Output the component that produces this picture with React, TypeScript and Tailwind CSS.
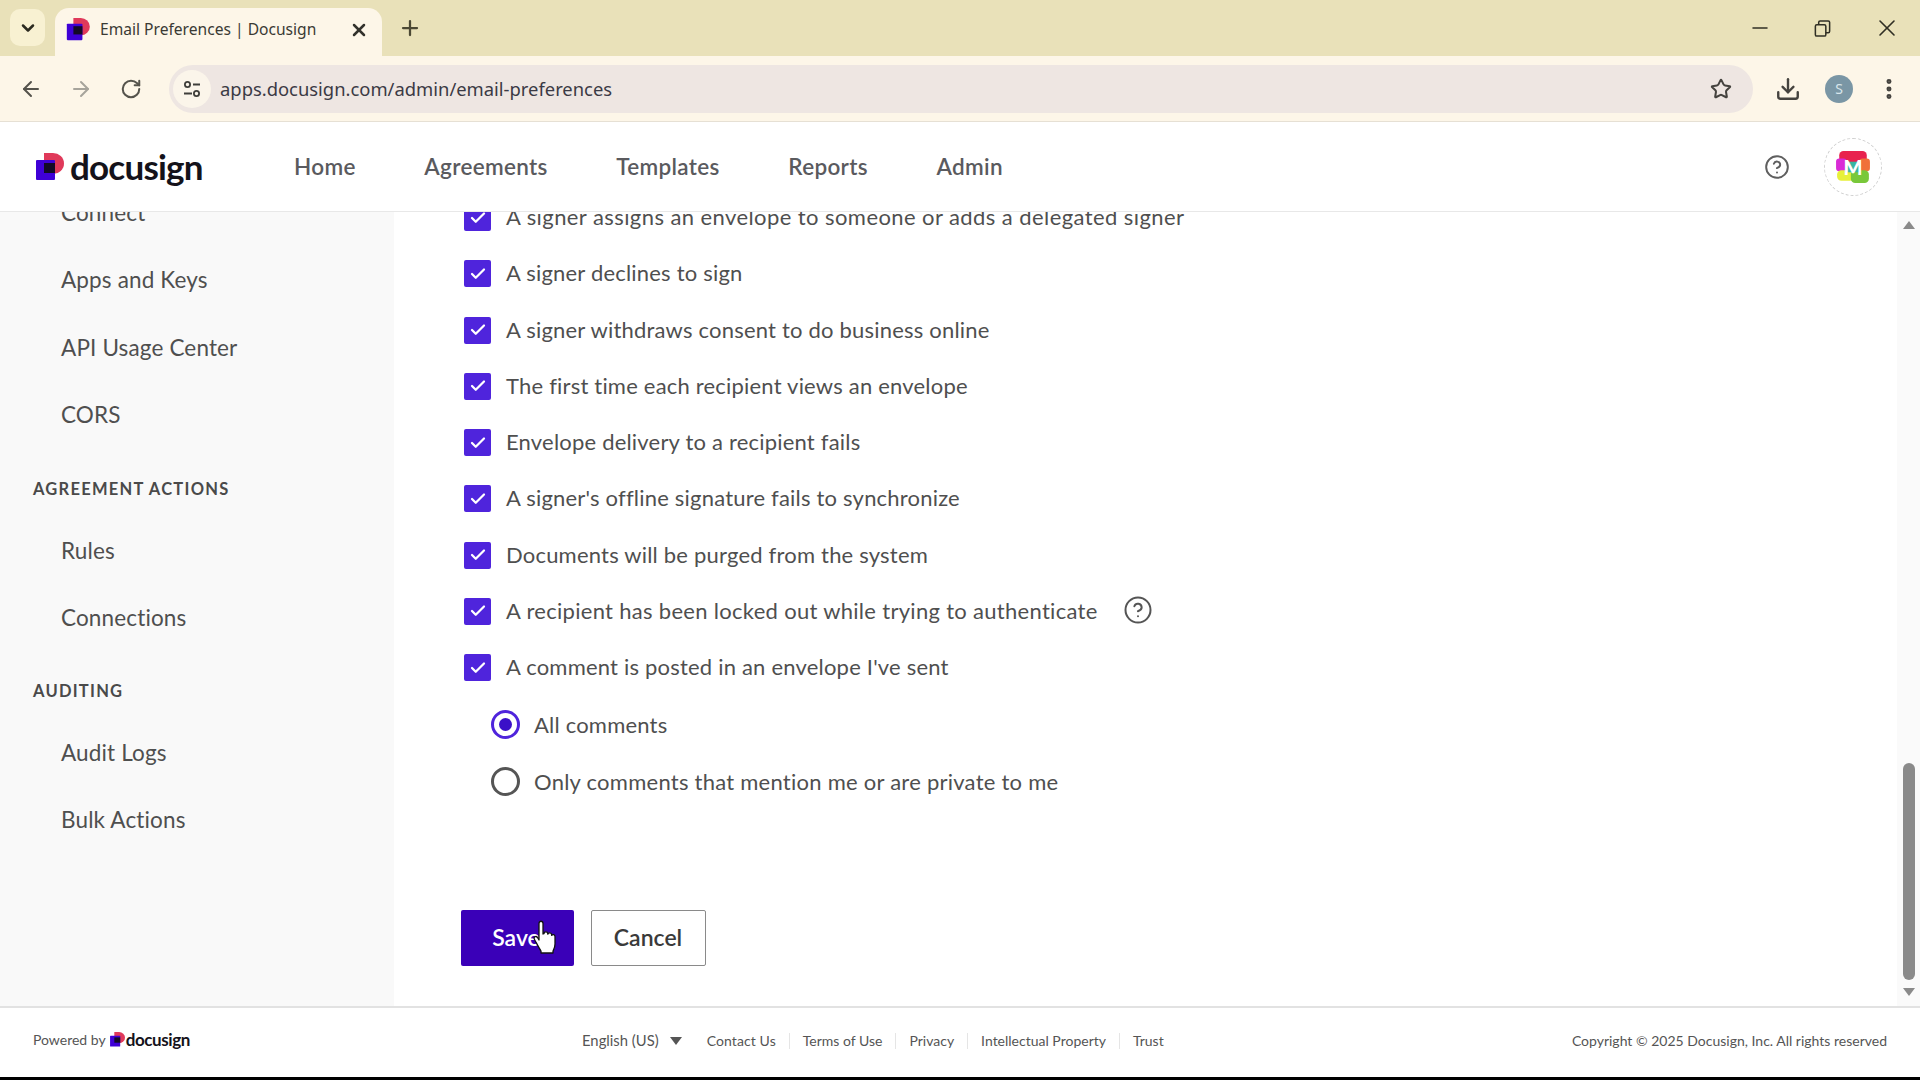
import React from "react";
import { ArrowLeft, ArrowRight, RotateCw, Plus, X, ChevronDown, Star, Download, EllipsisVertical, CircleHelp, Check, Minus } from "lucide-react";

const body = { fontFamily: '"Lato", "Noto Sans", sans-serif' };

function Logo({ className }: { className?: string }) {
  return (
    <svg viewBox="0 0 30 28" className={className}>
      <path d="M10 0h9a11 10.5 0 0 1 0 21h-9z" fill="#e0395a" />
      <rect x="2" y="7" width="19" height="20" rx="1" fill="#3f00d6" />
      <rect x="10" y="10" width="11" height="10" fill="#130a26" />
    </svg>
  );
}

function Row({ children, wide }: { children: React.ReactNode; wide?: boolean }) {
  return (
    <div className="flex h-[56.25px] items-center">
      <span className="flex h-[27px] w-[27px] translate-y-px items-center justify-center rounded-[2px] bg-[#4f24dc]">
        <Check className="h-[18px] w-[18px] text-white" strokeWidth={3} />
      </span>
      <span className={wide ? "ml-[15px] text-[22px] tracking-[0.42px] text-[#4f4f4f]" : "ml-[15px] text-[22px] tracking-[0.2px] text-[#4f4f4f]"}>{children}</span>
    </div>
  );
}

function Item({ label }: { label: string }) {
  return <div className="flex h-[67.3px] items-center pl-[61px] text-[22.5px] tracking-[0.15px] text-[#4f4f4f]">{label}</div>;
}

function Section({ label, top }: { label: string; top: string }) {
  return <div className={`flex h-[40px] items-center pl-[33px] text-[16.5px] font-bold tracking-[1.25px] text-[#4a4a4a] ${top}`}>{label}</div>;
}

const rows = [
  "A signer declines to sign",
  "A signer withdraws consent to do business online",
  "The first time each recipient views an envelope",
  "Envelope delivery to a recipient fails",
  "A signer's offline signature fails to synchronize",
  "Documents will be purged from the system",
];

export default function App() {
  return (
    <div className="flex h-screen w-full flex-col overflow-hidden bg-black" style={body}>
      {/* Tab strip */}
      <div className="relative flex h-[56px] shrink-0 items-end bg-[#e9e1b9]">
        <div className="mb-[10px] ml-[10px] flex h-[37px] w-[35px] items-center justify-center rounded-[10px] bg-[#f8f1d2]">
          <ChevronDown className="h-5 w-5 text-[#2b2a1f]" strokeWidth={3} />
        </div>
        <div className="ml-[10px] flex h-[48px] w-[327px] items-center rounded-t-[14px] bg-[#fdf6e8] pb-[5px] pl-[10px] pr-[13px]">
          <Logo className="h-[23px] w-[25px]" />
          <span className="ml-[10px] flex-1 text-[15.6px] text-[#3a3a34]" style={{ fontFamily: '"Noto Sans", sans-serif' }}>Email Preferences | Docusign</span>
          <X className="h-5 w-5 text-[#33322c]" strokeWidth={3} />
        </div>
        <Plus className="mb-[16px] ml-[16px] h-6 w-6 text-[#4b4834]" strokeWidth={2.25} />
        <div className="mb-[14px] ml-auto flex items-center gap-[41px] pr-[19px] text-[#302f24]">
          <Minus className="h-6 w-6" strokeWidth={1.5} />
          <svg viewBox="0 0 20 20" className="h-[19px] w-[19px]" fill="none" stroke="currentColor" strokeWidth="1.6">
            <rect x="2.5" y="6" width="11" height="12" rx="1.5" />
            <path d="M6 6V3.5A1.5 1.5 0 0 1 7.5 2H16a1.5 1.5 0 0 1 1.5 1.5V13a1.5 1.5 0 0 1-1.5 1.5h-2.5" />
          </svg>
          <X className="h-7 w-7" strokeWidth={1.4} />
        </div>
      </div>

      {/* Toolbar */}
      <div className="flex h-[66px] shrink-0 items-center border-b border-[#e6e0d4] bg-[#fdf6e8]">
        <ArrowLeft className="ml-[19px] h-6 w-6 text-[#55534c]" strokeWidth={2} />
        <ArrowRight className="ml-[26px] h-6 w-6 text-[#a7a49b]" strokeWidth={2} />
        <RotateCw className="ml-[27px] h-[22px] w-[22px] text-[#55534c]" strokeWidth={2.2} />
        <div className="ml-[27px] flex h-[48px] w-[1584px] items-center rounded-full bg-[#eee6e2] pl-[4px] pr-[21px]">
          <span className="flex h-[38px] w-[38px] items-center justify-center rounded-full bg-[#fbf5ea]">
            <svg viewBox="0 0 20 20" className="h-[20px] w-[20px]" fill="none" stroke="#3f3e3a" strokeWidth="1.8">
              <circle cx="5.5" cy="5.5" r="2.6" />
              <path d="M11 5.5h7M2 14.5h8" />
              <circle cx="14.5" cy="14.5" r="2.6" />
            </svg>
          </span>
          <span className="ml-[9px] flex-1 text-[18.4px] text-[#3b3a45]" style={{ fontFamily: '"Noto Sans", sans-serif' }}>apps.docusign.com/admin/email-preferences</span>
          <Star className="h-[22px] w-[22px] text-[#45433f]" strokeWidth={2.2} />
        </div>
        <Download className="ml-[22px] h-[26px] w-[26px] text-[#45433f]" strokeWidth={2.2} />
        <span className="ml-[24px] flex h-[28px] w-[28px] items-center justify-center rounded-full bg-[#7a96a5] text-[14px] text-[#d9e6ec]" style={{ fontFamily: '"Noto Sans", sans-serif' }}>S</span>
        <EllipsisVertical className="ml-[23px] h-[26px] w-[26px] text-[#45433f]" strokeWidth={2.6} />
      </div>

      {/* App header */}
      <div className="flex h-[90px] shrink-0 items-center border-b border-[#e8e8e8] bg-white">
        <div className="ml-[34px] flex w-[260px] items-center">
          <Logo className="h-[28px] w-[30px]" />
          <span className="ml-[6px] text-[35px] font-bold leading-none tracking-[-0.8px] text-[#14121a]">docusign</span>
        </div>
        <nav className="flex gap-[68.5px] text-[22.5px] font-semibold tracking-[0.33px] text-[#5a5a5e]">
          <span>Home</span>
          <span>Agreements</span>
          <span>Templates</span>
          <span>Reports</span>
          <span>Admin</span>
        </nav>
        <CircleHelp className="ml-auto h-[26px] w-[26px] text-[#5f5f5f]" strokeWidth={1.8} />
        <div className="ml-[34px] mr-[38px] flex h-[58px] w-[58px] items-center justify-center rounded-full border border-dashed border-[#d0d0d0]">
          <div className="relative flex h-[36px] w-[36px] items-center justify-center">
            <svg viewBox="0 0 34 34" className="absolute inset-0 h-full w-full">
              <rect x="4" y="2" width="26" height="12" rx="4" fill="#e8224e" />
              <rect x="1" y="9" width="10" height="12" rx="3" fill="#d92bd6" />
              <rect x="23" y="9" width="10" height="12" rx="3" fill="#f0703a" />
              <rect x="2" y="20" width="16" height="10" rx="4" fill="#e7f03a" />
              <rect x="15" y="20" width="17" height="12" rx="4" fill="#79c83a" />
              <rect x="10" y="12" width="14" height="10" fill="#39b5a0" />
            </svg>
            <span className="relative text-[20px] font-black leading-none text-white">M</span>
          </div>
        </div>
      </div>

      {/* Body */}
      <div className="flex min-h-0 flex-1 bg-white">
        <aside className="w-[394px] shrink-0 overflow-hidden bg-[#f9f9f9]">
          <div className="-mt-[32.8px]">
            <Item label="Connect" />
            <Item label="Apps and Keys" />
            <Item label="API Usage Center" />
            <Item label="CORS" />
            <Section label="AGREEMENT ACTIONS" top="mt-[21px] mb-[8px]" />
            <Item label="Rules" />
            <Item label="Connections" />
            <Section label="AUDITING" top="mt-[19px] mb-[8.4px]" />
            <Item label="Audit Logs" />
            <Item label="Bulk Actions" />
          </div>
        </aside>

        <main className="relative min-w-0 flex-1 overflow-hidden pl-[70px]">
          <div className="-mt-[23.5px]">
            <Row wide>A signer assigns an envelope to someone or adds a delegated signer</Row>
            {rows.map((r) => (
              <Row key={r}>{r}</Row>
            ))}
            <Row>
              <span className="flex items-center tracking-[0.3px]">
                A recipient has been locked out while trying to authenticate
                <CircleHelp className="ml-[25px] h-[30px] w-[30px] text-[#555]" strokeWidth={1.6} />
              </span>
            </Row>
            <Row>A comment is posted in an envelope I've sent</Row>

            <div className="ml-[27px] mt-[2px]">
              <div className="flex h-[56.25px] items-center">
                <span className="flex h-[29px] w-[29px] items-center justify-center rounded-full border-[3px] border-[#4f24dc]">
                  <span className="h-[13px] w-[13px] rounded-full bg-[#3b10c8]" />
                </span>
                <span className="ml-[14px] text-[22px] tracking-[0.2px] text-[#4f4f4f]">All comments</span>
              </div>
              <div className="flex h-[56.25px] items-center">
                <span className="h-[29px] w-[29px] rounded-full border-[3px] border-[#555]" />
                <span className="ml-[14px] text-[22px] tracking-[0.25px] text-[#4f4f4f]">Only comments that mention me or are private to me</span>
              </div>
            </div>

            <div className="relative -ml-[3.5px] mt-[101px] flex gap-[17px]">
              <button className="h-[56px] w-[113px] rounded-[2px] bg-[#3a00b8] pb-[2px] pr-[2px] text-center text-[23px] font-semibold text-white">Save</button>
              <button className="h-[56px] w-[115px] rounded-[2px] border border-[#8a8a8a] bg-white pb-[2px] text-[23px] font-semibold text-[#3a3a3a]">Cancel</button>
              <svg viewBox="0 0 24 34" className="absolute left-[72px] top-[10px] h-[34px] w-[24px]">
                <path d="M6 3.5c0-3 4-3 4 0V14l1-.4c.2-2.400 3.500-2.400 3.700-.1l.1.7c.6-2 3.600-1.800 3.800.3l.1.800c1-1.300 3.300-.6 3.300 1.200V24c0 3.500-1 5-2 7v2H8v-2c-2-3-4-7-6.500-11.500-1.500-2.500 1.500-4 3-2L6 20z" fill="#fff" stroke="#111" strokeWidth="1.3" strokeLinejoin="round" />
              </svg>
            </div>
          </div>

          {/* Scrollbar */}
          <div className="absolute right-0 top-0 flex h-full w-[23px] flex-col items-center bg-[#fafafa]">
            <div className="mt-[9px] h-0 w-0 border-x-[6px] border-b-[8px] border-x-transparent border-b-[#8a8a8a]" />
            <div className="mt-[534px] h-[217px] w-[12px] rounded-full bg-[#8a8a8a]" />
            <div className="mt-[8px] h-0 w-0 border-x-[6px] border-t-[8px] border-x-transparent border-t-[#8a8a8a]" />
          </div>
        </main>
      </div>

      {/* Footer */}
      <footer className="flex h-[71px] shrink-0 items-center border-t-2 border-[#e2e2e2] bg-white pb-[4px] text-[14px] text-[#555]">
        <span className="ml-[33px] -translate-y-px">Powered by</span>
        <Logo className="ml-[3px] h-[15px] w-[16px] -translate-y-px" />
        <span className="ml-[1px] -translate-y-px text-[17px] font-bold tracking-[-0.4px] text-[#14121a]">docusign</span>
        <div className="ml-[392px] flex items-center">
          <span className="text-[14.8px]">English (US)</span>
          <span className="ml-[11px] h-0 w-0 border-x-[6px] border-t-[8px] border-x-transparent border-t-[#555]" />
          <span className="ml-[25px] tracking-[0.1px]">Contact Us</span>
          <span className="mx-[13px] h-[16px] w-px bg-[#e5e5e5]" />
          <span>Terms of Use</span>
          <span className="mx-[13px] h-[16px] w-px bg-[#e5e5e5]" />
          <span>Privacy</span>
          <span className="mx-[13px] h-[16px] w-px bg-[#e5e5e5]" />
          <span>Intellectual Property</span>
          <span className="mx-[13px] h-[16px] w-px bg-[#e5e5e5]" />
          <span>Trust</span>
        </div>
        <span className="ml-auto mr-[33px]">Copyright © 2025 Docusign, Inc. All rights reserved</span>
      </footer>
      <div className="h-[3px] shrink-0 bg-black" />
    </div>
  );
}
